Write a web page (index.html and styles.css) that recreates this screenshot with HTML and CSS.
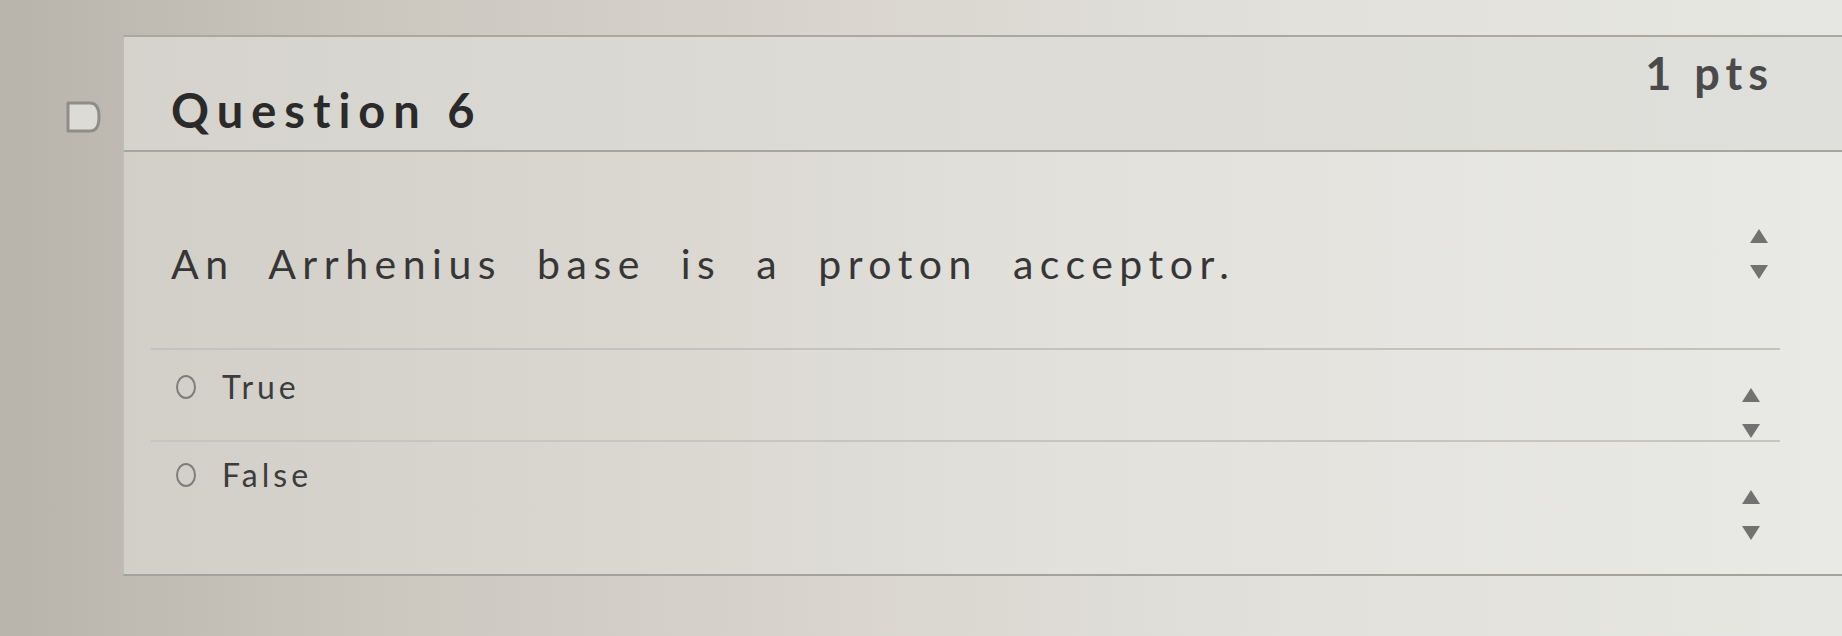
FILE: index.html
```html
<!DOCTYPE html>
<html lang="en">
<head>
  <meta charset="UTF-8">
  <meta name="viewport" content="width=device-width, initial-scale=1.0">
  <title>Question 6</title>
  <link rel="stylesheet" href="styles.css">
</head>
<body>
  <!-- Flag toggle for the question -->
  <div class="gutter">
    <svg class="flag" width="40" height="36" viewBox="0 0 40 36">
      <path d="M5 4 H27 Q36 4 36 18 Q36 32 27 32 H5 Z" fill="#dcdbd6" stroke="#8e8d88" stroke-width="3" stroke-linejoin="round"/>
    </svg>
  </div>

  <div class="question">
    <div class="question-header">
      <h2 class="question-title">Question 6</h2>
      <span class="question-points">1 pts</span>
    </div>

    <div class="question-body">
      <div class="question-text">
        <p>An Arrhenius base is a proton acceptor.</p>
        <div class="arrows">
          <span class="arrow-up"></span>
          <span class="arrow-down"></span>
        </div>
      </div>

      <ul class="answers">
        <li class="answer">
          <label><span class="radio"></span>True</label>
          <div class="arrows">
            <span class="arrow-up"></span>
            <span class="arrow-down"></span>
          </div>
        </li>
        <li class="answer">
          <label><span class="radio"></span>False</label>
          <div class="arrows">
            <span class="arrow-up"></span>
            <span class="arrow-down"></span>
          </div>
        </li>
      </ul>
    </div>
  </div>
</body>
</html>
```

FILE: styles.css
```css
html, body {
  height: 100%;
}
body {
  font-family: Lato, "Open Sans", sans-serif;
  margin: 0;
  padding: 0;
  display: flex;
  align-items: flex-start;
  overflow: hidden;
  color: #333;
  background: linear-gradient(90deg, #b8b4ac 0%, #cbc7bf 20%, #d9d5ce 45%, #e2e1dc 70%, #e6e6e2 100%);
}
.gutter {
  width: 123px;
  flex-shrink: 0;
  display: flex;
  justify-content: flex-end;
}
.flag {
  margin: 99px 20px 0 0;
}
.question {
  flex: 1;
  margin-top: 35px;
  border-top: 2px solid #a9a8a3;
  border-bottom: 2px solid #a3a29d;
  border-left: 1px solid #bdbcb6;
  background: linear-gradient(90deg, #d2cfc8 0%, #dad7d0 30%, #e2e1dc 55%, #e9e9e6 100%);
}
.question-header {
  height: 113px;
  display: flex;
  justify-content: space-between;
  padding: 0 68px 0 47px;
  border-bottom: 2px solid #a6a5a0;
  background: linear-gradient(90deg, #d5d3cc 0%, #dcdbd6 40%, #dfdfdb 100%);
}
.question-title {
  align-self: flex-end;
  margin: 0 0 14px;
  font-size: 47px;
  line-height: 52px;
  font-weight: 700;
  letter-spacing: 8px;
  color: #2a2a2a;
}
.question-points {
  align-self: flex-start;
  margin-top: 10px;
  font-size: 45px;
  line-height: 52px;
  font-weight: 700;
  letter-spacing: 6px;
  color: #4a4a4a;
}
.question-body {
  padding: 88px 0 42px;
}
.question-text {
  display: flex;
  justify-content: space-between;
  align-items: center;
  padding: 0 74px 0 47px;
}
.question-text p {
  margin: 0;
  font-size: 41px;
  line-height: 48px;
  letter-spacing: 6.5px;
  word-spacing: 18px;
  color: #363636;
}
.question-text .arrows {
  margin-top: -20px;
}
.arrows {
  display: flex;
  flex-direction: column;
  gap: 22px;
}
.arrow-up {
  width: 0;
  height: 0;
  border-left: 9px solid transparent;
  border-right: 9px solid transparent;
  border-bottom: 14px solid #727270;
}
.arrow-down {
  width: 0;
  height: 0;
  border-left: 9px solid transparent;
  border-right: 9px solid transparent;
  border-top: 14px solid #727270;
}
.answers {
  list-style: none;
  margin: 60px 62px 0 27px;
  padding: 0;
  border-top: 2px solid #c3c2bd;
}
.answer {
  display: flex;
  justify-content: space-between;
  align-items: flex-start;
  height: 90px;
  padding-right: 20px;
}
.answer + .answer {
  border-top: 2px solid #c6c5c0;
}
.answer label {
  display: flex;
  align-items: center;
  gap: 26px;
  margin: 18px 0 0 25px;
  font-size: 32px;
  line-height: 38px;
  letter-spacing: 4px;
  color: #3c3c3c;
}
.answer + .answer label {
  margin-top: 14px;
}
.radio {
  width: 16px;
  height: 20px;
  border: 2px solid #7d7d7a;
  border-radius: 50%;
}
.answer .arrows {
  margin-top: 38px;
}
.answer + .answer .arrows {
  margin-top: 48px;
}
```
